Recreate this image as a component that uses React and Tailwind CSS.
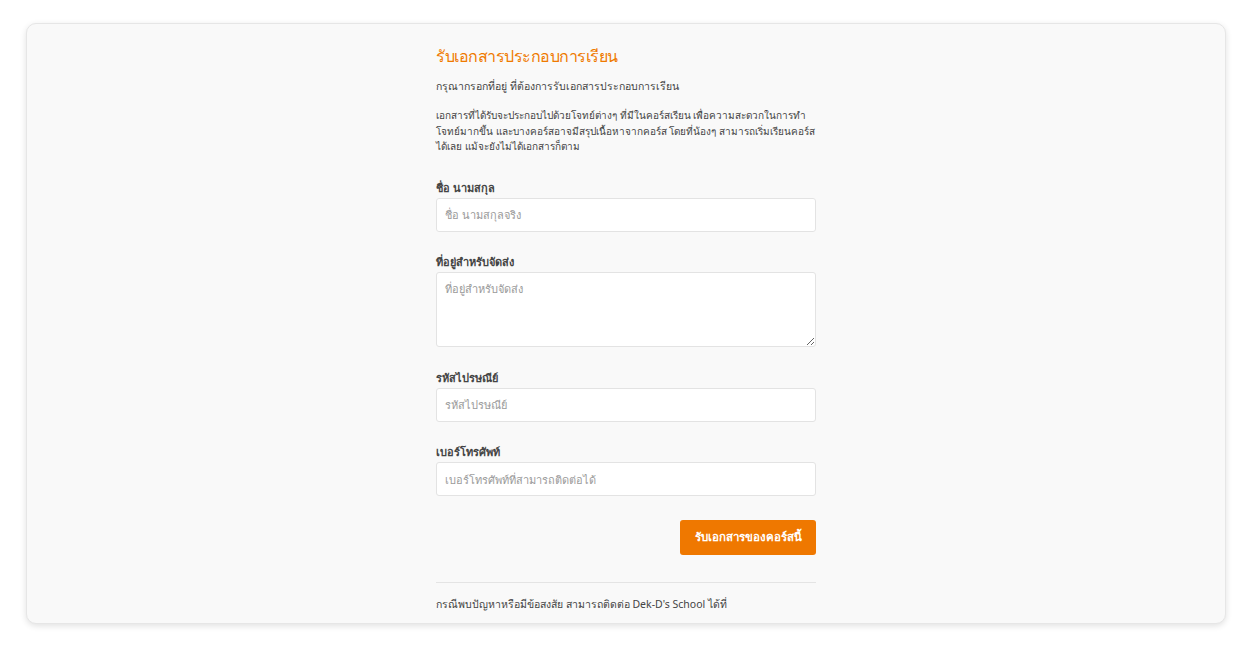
const Field = ({ label, placeholder, area }) => {
  return (
    <div className="flex flex-col">
      <label className="text-[11px] leading-[16px] font-semibold text-[#444] mb-[2px]">{label}</label>
      {area ? (
        <textarea
          placeholder={placeholder}
          className="h-[75px] w-full resize-y rounded-[3px] border border-[#e3e3e3] bg-white px-[8px] py-[8px] text-[11px] leading-[16px] text-[#444] placeholder:text-[#9a9a9a] outline-none"
        />
      ) : (
        <input
          placeholder={placeholder}
          className="h-[34px] w-full rounded-[3px] border border-[#e3e3e3] bg-white px-[8px] text-[11px] text-[#444] placeholder:text-[#9a9a9a] outline-none"
        />
      )}
    </div>
  )
}

const App = () => {
  return (
    <div className="w-full min-h-screen bg-white pt-[23px] pl-[26px] font-['Tahoma','Noto_Sans','DejaVu_Sans',sans-serif]">
      <div className="h-[601px] w-[1200px] overflow-hidden rounded-[10px] border border-[#e6e6e6] bg-[#f9f9f9] shadow-[0_2px_6px_rgba(0,0,0,0.12)]">
        <div className="mx-auto w-[380px] pt-[20px]">
          <h1 className="text-[16px] leading-[24px] tracking-[-0.5px] text-[#ef7a00]">รับเอกสารประกอบการเรียน</h1>
          <p className="mt-[10px] text-[10.5px] leading-[16px] text-[#444] whitespace-nowrap">
            กรุณากรอกที่อยู่ ที่ต้องการรับเอกสารประกอบการเรียน
          </p>
          <div className="mt-[14px] flex flex-col text-[10px] leading-[15.5px] text-[#444] whitespace-nowrap">
            <span>เอกสารที่ได้รับจะประกอบไปด้วยโจทย์ต่างๆ ที่มีในคอร์สเรียน เพื่อความสะดวกในการทำ</span>
            <span>โจทย์มากขึ้น และบางคอร์สอาจมีสรุปเนื้อหาจากคอร์ส โดยที่น้องๆ สามารถเริ่มเรียนคอร์ส</span>
            <span>ได้เลย แม้จะยังไม่ได้เอกสารก็ตาม</span>
          </div>

          <div className="mt-[25px] flex flex-col gap-[22.5px]">
            <Field label="ชื่อ นามสกุล" placeholder="ชื่อ นามสกุลจริง" />
            <Field label="ที่อยู่สำหรับจัดส่ง" placeholder="ที่อยู่สำหรับจัดส่ง" area />
            <Field label="รหัสไปรษณีย์" placeholder="รหัสไปรษณีย์" />
            <Field label="เบอร์โทรศัพท์" placeholder="เบอร์โทรศัพท์ที่สามารถติดต่อได้" />
          </div>

          <div className="mt-[23.5px] flex justify-end">
            <button className="h-[35px] w-[136px] rounded-[3px] bg-[#ef7800] text-[11.5px] font-semibold text-white">
              รับเอกสารของคอร์สนี้
            </button>
          </div>

          <div className="mt-[27px] border-t border-[#e4e4e4]" />
          <p className="mt-[13px] text-[10.5px] leading-[16px] text-[#444] whitespace-nowrap">
            กรณีพบปัญหาหรือมีข้อสงสัย สามารถติดต่อ Dek-D's School ได้ที่
          </p>
        </div>
      </div>
    </div>
  )
}

export default App
